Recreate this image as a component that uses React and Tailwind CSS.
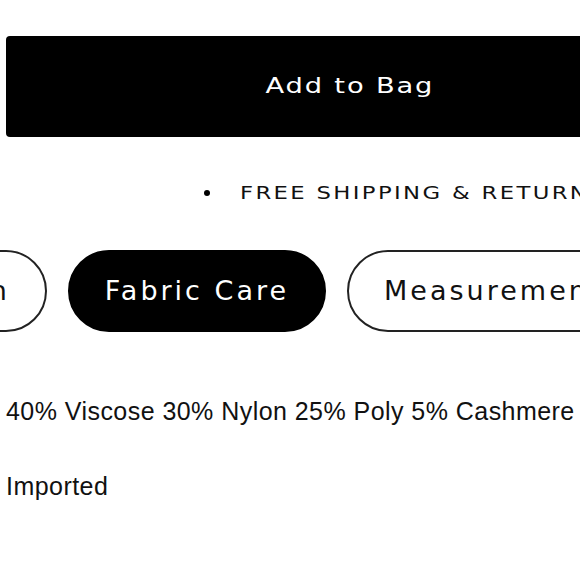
import React from 'react';

const tabs = ['Description', 'Fabric Care', 'Measurements'];

function App() {
  const active = 'Fabric Care';

  return (
    <div className="w-[580px] h-[580px] overflow-hidden bg-white text-black">
      <div className="w-[700px] pt-[36px] px-[6px]">
        {/* Add to bag */}
        <button className="w-[688px] h-[101px] bg-black text-white rounded-[4px] font-['DejaVu_Sans',sans-serif] text-[21px] flex items-center justify-center">
          <span className="inline-block scale-x-[1.3] tracking-[1.4px]">Add to Bag</span>
        </button>

        {/* Shipping note */}
        <ul className="mt-[41px] h-[30px] flex items-center pl-[198px] font-['DejaVu_Sans',sans-serif] text-[17.5px] text-[#111]">
          <li className="flex items-center whitespace-nowrap">
            <span className="w-[6px] h-[6px] rounded-full bg-black" />
            <span className="ml-[30px] inline-block origin-left scale-x-[1.3] tracking-[1.8px]">FREE SHIPPING &amp; RETURNS</span>
          </li>
        </ul>

        {/* Tabs */}
        <div className="mt-[42px] -ml-[220px] flex gap-[21px]">
          {tabs.map((tab) => (
            <button
              key={tab}
              className={
                tab === active
                  ? "h-[82px] shrink-0 px-[35px] rounded-full border-2 border-black bg-black text-white font-['DejaVu_Sans',sans-serif] text-[27px] tracking-[3px] whitespace-nowrap"
                  : "h-[82px] shrink-0 px-[35px] rounded-full border-2 border-[#222] bg-white text-[#111] font-['DejaVu_Sans',sans-serif] text-[27px] tracking-[3px] whitespace-nowrap"
              }
            >
              {tab}
            </button>
          ))}
        </div>

        {/* Fabric care content */}
        <div className="font-['Liberation_Sans',Arial,sans-serif] text-[25px] leading-[36px] tracking-[0.45px] text-[#111]">
          <p className="mt-[61px] whitespace-nowrap">40% Viscose 30% Nylon 25% Poly 5% Cashmere</p>
          <p className="mt-[39px]">Imported</p>
        </div>
      </div>
    </div>
  );
}

export default App;
